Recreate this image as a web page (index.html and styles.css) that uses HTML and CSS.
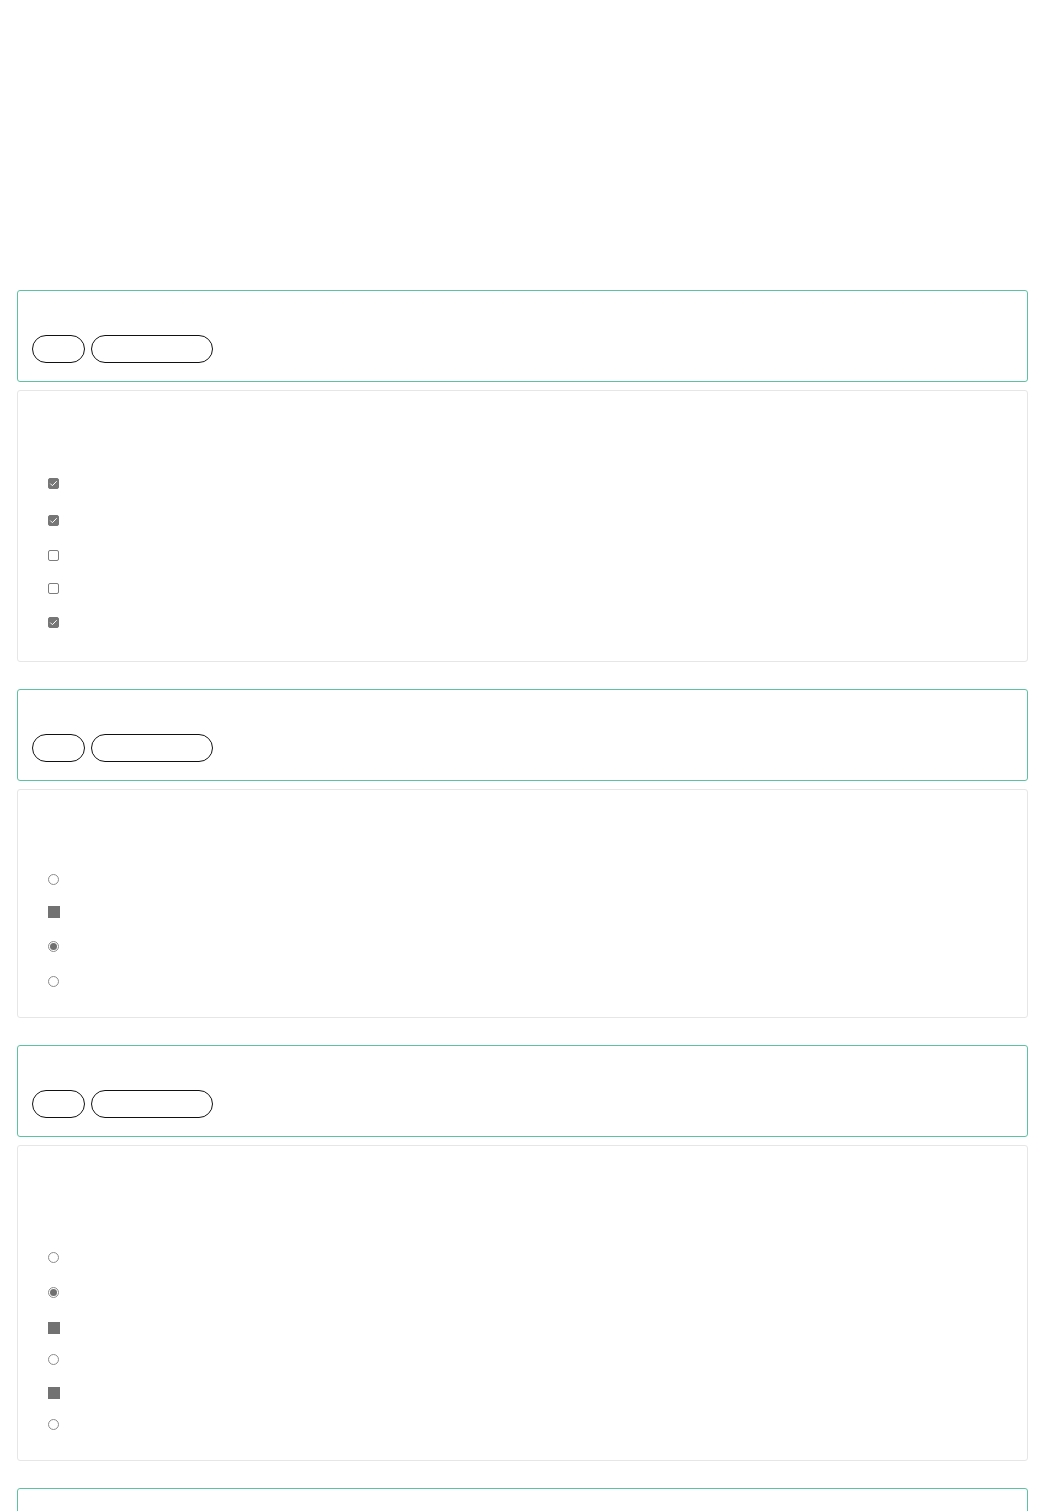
FILE: index.html
```html
<!DOCTYPE html>
<html lang="en">
<head>
<meta charset="utf-8">
<title>Options</title>
<link rel="stylesheet" href="styles.css">
</head>
<body>
<main class="page">
  <section class="group">
    <header class="card-head">
      <div class="pills"><span class="pill pill-sm"></span><span class="pill pill-lg"></span></div>
    </header>
    <div class="card-body body-1">
      <ul class="opts">
        <li class="opt"><span class="ico cb on"><svg viewBox="0 0 11 11"><path d="M2.3 5.6 L4.4 7.7 L8.7 3.2"/></svg></span></li>
        <li class="opt s37"><span class="ico cb on"><svg viewBox="0 0 11 11"><path d="M2.3 5.6 L4.4 7.7 L8.7 3.2"/></svg></span></li>
        <li class="opt"><span class="ico cb"></span></li>
        <li class="opt s33"><span class="ico cb"></span></li>
        <li class="opt s34"><span class="ico cb on"><svg viewBox="0 0 11 11"><path d="M2.3 5.6 L4.4 7.7 L8.7 3.2"/></svg></span></li>
      </ul>
    </div>
  </section>

  <section class="group">
    <header class="card-head">
      <div class="pills"><span class="pill pill-sm"></span><span class="pill pill-lg"></span></div>
    </header>
    <div class="card-body body-2">
      <ul class="opts">
        <li class="opt"><span class="ico rd"></span></li>
        <li class="opt s32"><span class="ico sq"></span></li>
        <li class="opt"><span class="ico rd on"></span></li>
        <li class="opt"><span class="ico rd"></span></li>
      </ul>
    </div>
  </section>

  <section class="group">
    <header class="card-head">
      <div class="pills"><span class="pill pill-sm"></span><span class="pill pill-lg"></span></div>
    </header>
    <div class="card-body body-3">
      <ul class="opts">
        <li class="opt"><span class="ico rd"></span></li>
        <li class="opt"><span class="ico rd on"></span></li>
        <li class="opt"><span class="ico sq"></span></li>
        <li class="opt s32"><span class="ico rd"></span></li>
        <li class="opt s33"><span class="ico sq"></span></li>
        <li class="opt s32"><span class="ico rd"></span></li>
      </ul>
    </div>
  </section>

  <section class="group">
    <header class="card-head">
      <div class="pills"><span class="pill pill-sm"></span><span class="pill pill-lg"></span></div>
    </header>
  </section>
</main>
</body>
</html>
```

FILE: styles.css
```css
* { box-sizing: border-box; }

html, body {
  margin: 0;
  background: #ffffff;
  font-family: "Liberation Sans", Arial, sans-serif;
}

.page {
  padding: 290px 16px 0 17px;
}

.group + .group {
  margin-top: 27px;
}

.card-head {
  height: 92px;
  border: 1px solid #5cc2a1;
  border-radius: 3px;
  padding: 44px 14px 0 14px;
}

.pills {
  display: flex;
  gap: 6px;
}

.pill {
  display: block;
  height: 28px;
  border: 1px solid #111111;
  border-radius: 14px;
}

.pill-sm { width: 53px; }
.pill-lg { width: 122px; }

.card-body {
  margin-top: 8px;
  border: 1px solid #e6e6e6;
  border-radius: 3px;
  padding-left: 30px;
}

.body-1 { padding-top: 87px; padding-bottom: 33px; }
.body-2 { padding-top: 84px; padding-bottom: 30px; }
.body-3 { padding-top: 106px; padding-bottom: 30px; }

.opts {
  list-style: none;
  margin: 0;
  padding: 0;
}

.opt {
  display: flex;
  height: 11px;
  align-items: flex-start;
}

.opt + .opt { margin-top: 24px; }
.opt.s32 { margin-top: 21px; }
.opt.s33 { margin-top: 22px; }
.opt.s34 { margin-top: 23px; }
.opt.s37 { margin-top: 26px; }

.ico {
  display: block;
  width: 11px;
  height: 11px;
  flex: none;
}

.cb {
  border: 1px solid #7d7d7d;
  border-radius: 2px;
  background: #fff;
}

.cb.on {
  background: #767676;
  border-color: #767676;
}

.cb svg {
  display: block;
  width: 11px;
  height: 11px;
  margin: -1px;
}

.cb svg path {
  fill: none;
  stroke: #ffffff;
  stroke-width: 1;
}

.sq {
  width: 12px;
  height: 12px;
  background: #727272;
}

.rd {
  border: 1px solid #8c8c8c;
  border-radius: 50%;
  background: #fff;
  position: relative;
}

.rd.on::after {
  content: "";
  position: absolute;
  left: 1px;
  top: 1px;
  width: 7px;
  height: 7px;
  border-radius: 50%;
  background: #6f6f6f;
}
```
